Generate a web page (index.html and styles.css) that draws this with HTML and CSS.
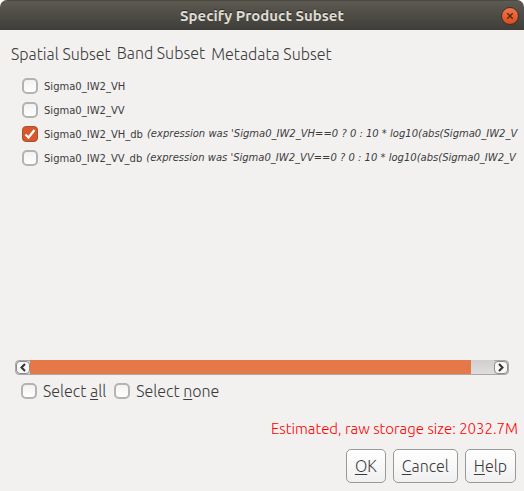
FILE: index.html
```html
<!DOCTYPE html>
<html lang="en">
<head>
<meta charset="utf-8">
<title>Specify Product Subset</title>
<link rel="stylesheet" href="styles.css">
</head>
<body>
<div class="dialog">
  <header class="titlebar">
    <h1 class="title">Specify Product Subset</h1>
    <button class="close" type="button" aria-label="Close">
      <svg width="18" height="18" viewBox="0 0 18 18"><path d="M6.3 6.3l5.4 5.4M11.7 6.3l-5.4 5.4" fill="none" stroke="#4b2b18" stroke-width="1.4"/></svg>
    </button>
  </header>
  <nav class="tabs" role="tablist">
    <button class="tab" type="button" role="tab">Spatial Subset</button>
    <button class="tab selected" type="button" role="tab" aria-selected="true">Band Subset</button>
    <button class="tab" type="button" role="tab">Metadata Subset</button>
  </nav>
  <main class="panel">
    <ul class="bands">
      <li class="band"><input class="check" type="checkbox" id="vh"><label for="vh">Sigma0_IW2_VH</label></li>
      <li class="band"><input class="check" type="checkbox" id="vv"><label for="vv">Sigma0_IW2_VV</label></li>
      <li class="band"><input class="check" type="checkbox" id="vhdb" checked><label for="vhdb">Sigma0_IW2_VH_db</label><span class="note">(expression was 'Sigma0_IW2_VH==0 ? 0 : 10 * log10(abs(Sigma0_IW2_V</span></li>
      <li class="band"><input class="check" type="checkbox" id="vvdb"><label for="vvdb">Sigma0_IW2_VV_db</label><span class="note">(expression was 'Sigma0_IW2_VV==0 ? 0 : 10 * log10(abs(Sigma0_IW2_V</span></li>
    </ul>
    <div class="scrollbar">
      <button class="arrow" type="button" aria-label="Scroll left"><svg width="13" height="13" viewBox="0 0 13 13"><path d="M9 3L5.500 6.500 9 10" fill="none" stroke="#333" stroke-width="2"/></svg></button>
      <div class="track"><div class="thumb"></div></div>
      <button class="arrow" type="button" aria-label="Scroll right"><svg width="13" height="13" viewBox="0 0 13 13"><path d="M5 3l3.500 3.500L5 10" fill="none" stroke="#333" stroke-width="2"/></svg></button>
    </div>
    <div class="select-row">
      <input class="check" type="checkbox" id="all"><label for="all">Select <u>a</u>ll</label>
      <input class="check" type="checkbox" id="none"><label for="none">Select <u>n</u>one</label>
    </div>
  </main>
  <p class="estimate">Estimated, raw storage size: 2032.7M</p>
  <footer class="actions">
    <button class="button" type="button"><u>O</u>K</button>
    <button class="button" type="button"><u>C</u>ancel</button>
    <button class="button" type="button"><u>H</u>elp</button>
  </footer>
</div>
</body>
</html>
```
FILE: styles.css
```css
* {
  box-sizing: border-box;
}

body {
  margin: 0;
  background: #fff;
  color: #3c3c3c;
  font: 300 16px/20px "Ubuntu", "Open Sans", sans-serif;
}

button {
  margin: 0;
  padding: 0;
  border: 0;
  background: none;
  color: inherit;
  font: inherit;
}

svg {
  display: block;
}

u {
  text-decoration-thickness: 1px;
  text-underline-offset: 2px;
}

.dialog {
  display: flex;
  flex-direction: column;
  min-height: 100vh;
  overflow: hidden;
  border-radius: 7px 7px 0 0;
  background: #f2f1f0;
}

.titlebar {
  display: grid;
  grid-template-columns: 18px 1fr 18px;
  align-items: center;
  height: 30px;
  padding: 0 5px;
  border-top: 1px solid #4c4a43;
  background: linear-gradient(#5c5a51, #3e3d38);
}

.title {
  grid-column: 2;
  margin: 0;
  color: #dfdbd2;
  font: 700 15px/20px "Ubuntu", "Noto Sans", sans-serif;
  text-align: center;
  text-shadow: 0 -1px #2b2a27;
}

.close {
  width: 18px;
  height: 18px;
  border: 1px solid #35342f;
  border-radius: 50%;
  background: linear-gradient(#f4764a, #df4b1c);
}

.close svg {
  margin: -1px;
}

.tabs {
  display: flex;
  gap: 6px;
  height: 44px;
  padding: 14px 11px 0;
  align-items: flex-start;
}

.tab {
  line-height: 20px;
  white-space: nowrap;
}

.tab.selected {
  margin-top: -1px;
}

.panel {
  display: flex;
  flex: 1;
  flex-direction: column;
  padding: 0 15px;
}

.bands {
  flex: 1;
  margin: 0;
  padding: 0 0 0 7px;
  list-style: none;
  font: 400 10px/24px "DejaVu Sans", sans-serif;
}

.band {
  display: flex;
  align-items: center;
  height: 24px;
  white-space: nowrap;
}

.band label {
  padding-top: 1px;
}

.note {
  margin-left: 4px;
  font-style: italic;
}

.check {
  flex: none;
  appearance: none;
  width: 16px;
  height: 16px;
  margin: 0 6px 0 0;
  border: 2px solid #b5b3b1;
  border-radius: 5px;
  background: linear-gradient(#f2f2f2, #fff);
}

.check:checked {
  border: 1px solid #a5512f;
  border-radius: 4px;
  background: #d9582b url("data:image/svg+xml,%3Csvg xmlns='http://www.w3.org/2000/svg' viewBox='0 0 14 14'%3E%3Cpath d='M2.500 7.500l3 3 6-7.500' fill='none' stroke='white' stroke-width='2.200'/%3E%3C/svg%3E") center / 14px no-repeat;
}

.scrollbar {
  display: flex;
  height: 15px;
  border: 1px solid #aaa8a6;
  border-radius: 4px;
  background: #d5d5d5;
}

.arrow {
  flex: none;
  width: 14px;
  border: 1px solid #8d8b89;
  border-radius: 4px;
  background: #f7f7f7;
}

.arrow svg {
  margin: -1px;
}

.track {
  flex: 1;
  margin-top: -1px;
  background: linear-gradient(#cfcfcf, #dedede);
}

.thumb {
  width: 95%;
  height: 14px;
  background: #e57849;
}

.select-row {
  display: flex;
  align-items: center;
  height: 32px;
  padding-left: 6px;
}

.select-row label {
  margin-right: 8px;
}

.estimate {
  margin: 12px 6px 10px;
  color: #f00;
  font-size: 15px;
  text-align: right;
}

.actions {
  display: flex;
  justify-content: flex-end;
  gap: 7px;
  padding: 0 8px 8px;
}

.button {
  height: 34px;
  padding: 0 8px;
  border: 1px solid #999;
  border-radius: 5px;
  background: linear-gradient(#fff, #f0f0f0);
}
```
